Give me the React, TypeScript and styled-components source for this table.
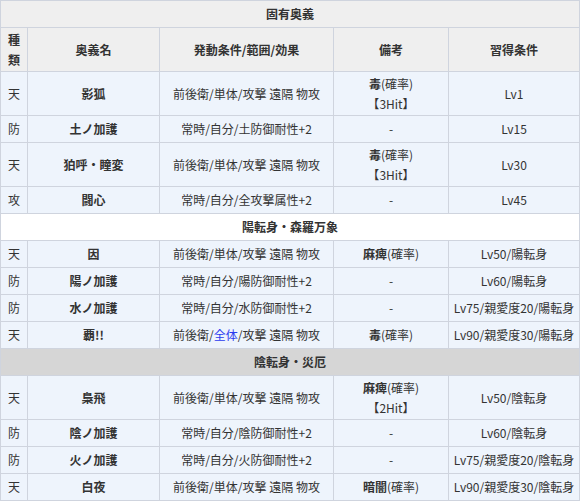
import React from 'react';
import styled, { createGlobalStyle } from 'styled-components';

const GlobalStyle = createGlobalStyle`
  html, body {
    margin: 0;
    padding: 0;
    background: #ffffff;
  }
  body {
    font-family: "Noto Sans CJK JP", "Noto Sans", sans-serif;
    font-size: 12px;
    color: #333;
  }
`;

const BORDER = '#cfd4de';

const Table = styled.table`
  width: 579px;
  border-collapse: collapse;
  table-layout: fixed;
  border: 1px solid ${BORDER};
`;

const SectionCell = styled.td<{ $tone: 'gray' | 'white' | 'dark' }>`
  height: 26px;
  padding: 0;
  text-align: center;
  font-weight: bold;
  line-height: 16px;
  border: 1px solid ${BORDER};
  background: ${(p) =>
    p.$tone === 'gray' ? '#efefef' : p.$tone === 'dark' ? '#d6d6d6' : '#ffffff'};
`;

const HeadCell = styled.th`
  height: 43px;
  padding: 0;
  font-weight: bold;
  text-align: center;
  line-height: 20px;
  background: #efefef;
  border: 1px solid ${BORDER};
`;

const Cell = styled.td<{ $tall?: boolean; $bold?: boolean }>`
  height: ${(p) => (p.$tall ? 43 : 26)}px;
  padding: 0;
  text-align: center;
  font-weight: ${(p) => (p.$bold ? 'bold' : 'normal')};
  line-height: 20px;
  background: #eef4fc;
  border: 1px solid ${BORDER};
  white-space: nowrap;
`;

const Strong = styled.b`
  font-weight: bold;
`;

const Blue = styled.span`
  color: #2b3bef;
`;

type Row = {
  kind: string;
  name: string;
  cond: React.ReactNode;
  note: React.ReactNode;
  get: string;
  tall?: boolean;
};

const atk = '前後衛/単体/攻撃 遠隔 物攻';

const note = (bold: string, hit?: string) => (
  <>
    <Strong>{bold}</Strong>(確率)
    {hit && (
      <>
        <br />【{hit}】
      </>
    )}
  </>
);

const sections: { title: string; tone: 'gray' | 'white' | 'dark'; header?: boolean; rows: Row[] }[] = [
  {
    title: '固有奥義',
    tone: 'gray',
    header: true,
    rows: [
      { kind: '天', name: '影狐', cond: atk, note: note('毒', '3Hit'), get: 'Lv1', tall: true },
      { kind: '防', name: '土ノ加護', cond: '常時/自分/土防御耐性+2', note: '-', get: 'Lv15' },
      { kind: '天', name: '狛呼・瞳変', cond: atk, note: note('毒', '3Hit'), get: 'Lv30', tall: true },
      { kind: '攻', name: '闘心', cond: '常時/自分/全攻撃属性+2', note: '-', get: 'Lv45' },
    ],
  },
  {
    title: '陽転身・森羅万象',
    tone: 'white',
    rows: [
      { kind: '天', name: '因', cond: atk, note: note('麻痺'), get: 'Lv50/陽転身' },
      { kind: '防', name: '陽ノ加護', cond: '常時/自分/陽防御耐性+2', note: '-', get: 'Lv60/陽転身' },
      { kind: '防', name: '水ノ加護', cond: '常時/自分/水防御耐性+2', note: '-', get: 'Lv75/親愛度20/陽転身' },
      {
        kind: '天',
        name: '覇!!',
        cond: (
          <>
            前後衛/<Blue>全体</Blue>/攻撃 遠隔 物攻
          </>
        ),
        note: note('毒'),
        get: 'Lv90/親愛度30/陽転身',
      },
    ],
  },
  {
    title: '陰転身・災厄',
    tone: 'dark',
    rows: [
      { kind: '天', name: '梟飛', cond: atk, note: note('麻痺', '2Hit'), get: 'Lv50/陰転身', tall: true },
      { kind: '防', name: '陰ノ加護', cond: '常時/自分/陰防御耐性+2', note: '-', get: 'Lv60/陰転身' },
      { kind: '防', name: '火ノ加護', cond: '常時/自分/火防御耐性+2', note: '-', get: 'Lv75/親愛度20/陰転身' },
      { kind: '天', name: '白夜', cond: atk, note: note('暗闇'), get: 'Lv90/親愛度30/陰転身' },
    ],
  },
];

export default function App() {
  return (
    <>
      <GlobalStyle />
      <Table>
        <colgroup>
          <col style={{ width: 27 }} />
          <col style={{ width: 132 }} />
          <col style={{ width: 174 }} />
          <col style={{ width: 115 }} />
          <col style={{ width: 131 }} />
        </colgroup>
        <tbody>
          {sections.map((s) => (
            <React.Fragment key={s.title}>
              <tr>
                <SectionCell colSpan={5} $tone={s.tone}>
                  {s.title}
                </SectionCell>
              </tr>
              {s.header && (
                <tr>
                  <HeadCell>
                    種<br />類
                  </HeadCell>
                  <HeadCell>奥義名</HeadCell>
                  <HeadCell>発動条件/範囲/効果</HeadCell>
                  <HeadCell>備考</HeadCell>
                  <HeadCell>習得条件</HeadCell>
                </tr>
              )}
              {s.rows.map((r) => (
                <tr key={r.name}>
                  <Cell $tall={r.tall}>{r.kind}</Cell>
                  <Cell $tall={r.tall} $bold>
                    {r.name}
                  </Cell>
                  <Cell $tall={r.tall}>{r.cond}</Cell>
                  <Cell $tall={r.tall}>{r.note}</Cell>
                  <Cell $tall={r.tall}>{r.get}</Cell>
                </tr>
              ))}
            </React.Fragment>
          ))}
        </tbody>
      </Table>
    </>
  );
}
